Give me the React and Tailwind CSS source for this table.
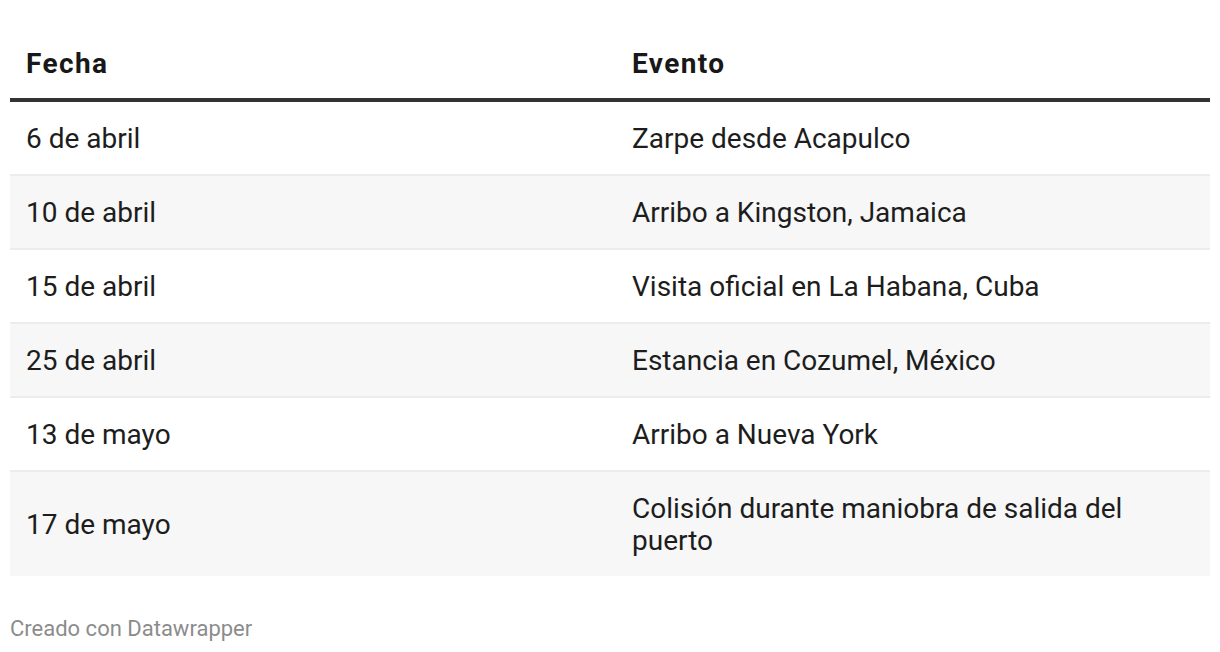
const rows = [
  ["6 de abril", "Zarpe desde Acapulco"],
  ["10 de abril", "Arribo a Kingston, Jamaica"],
  ["15 de abril", "Visita oficial en La Habana, Cuba"],
  ["25 de abril", "Estancia en Cozumel, México"],
  ["13 de mayo", "Arribo a Nueva York"],
  ["17 de mayo", "Colisión durante maniobra de salida del puerto"],
];

export default function App() {
  return (
    <div className="w-[1220px] h-[652px] bg-white px-[10px] pt-[48px] text-[#1d1d1d]" style={{ fontFamily: "Roboto, sans-serif" }}>
      <div className="grid grid-cols-[606px_1fr] border-b-[4px] border-[#333333] text-[28px] leading-[32px] font-bold tracking-[1.4px] text-[#181818]">
        <div className="pl-4 pb-[18px]">Fecha</div>
        <div className="pl-4 pb-[18px]">Evento</div>
      </div>
      <div className="flex flex-col divide-y-2 divide-[#ececec]">
        {rows.map((r, i) => (
          <div
            key={i}
            className={`grid grid-cols-[606px_1fr] items-center text-[28px] leading-[32px] ${i % 2 === 1 ? "bg-[#f7f7f7]" : "bg-white"}`}
          >
            <div className="pl-4 pt-[21px] pb-[19px]">{r[0]}</div>
            <div className="pl-4 pr-20 pt-[21px] pb-[19px]">{r[1]}</div>
          </div>
        ))}
      </div>
      <div className="mt-[40px] text-[22px] leading-[26px] text-[#8c8c8c]">Creado con Datawrapper</div>
    </div>
  );
}
